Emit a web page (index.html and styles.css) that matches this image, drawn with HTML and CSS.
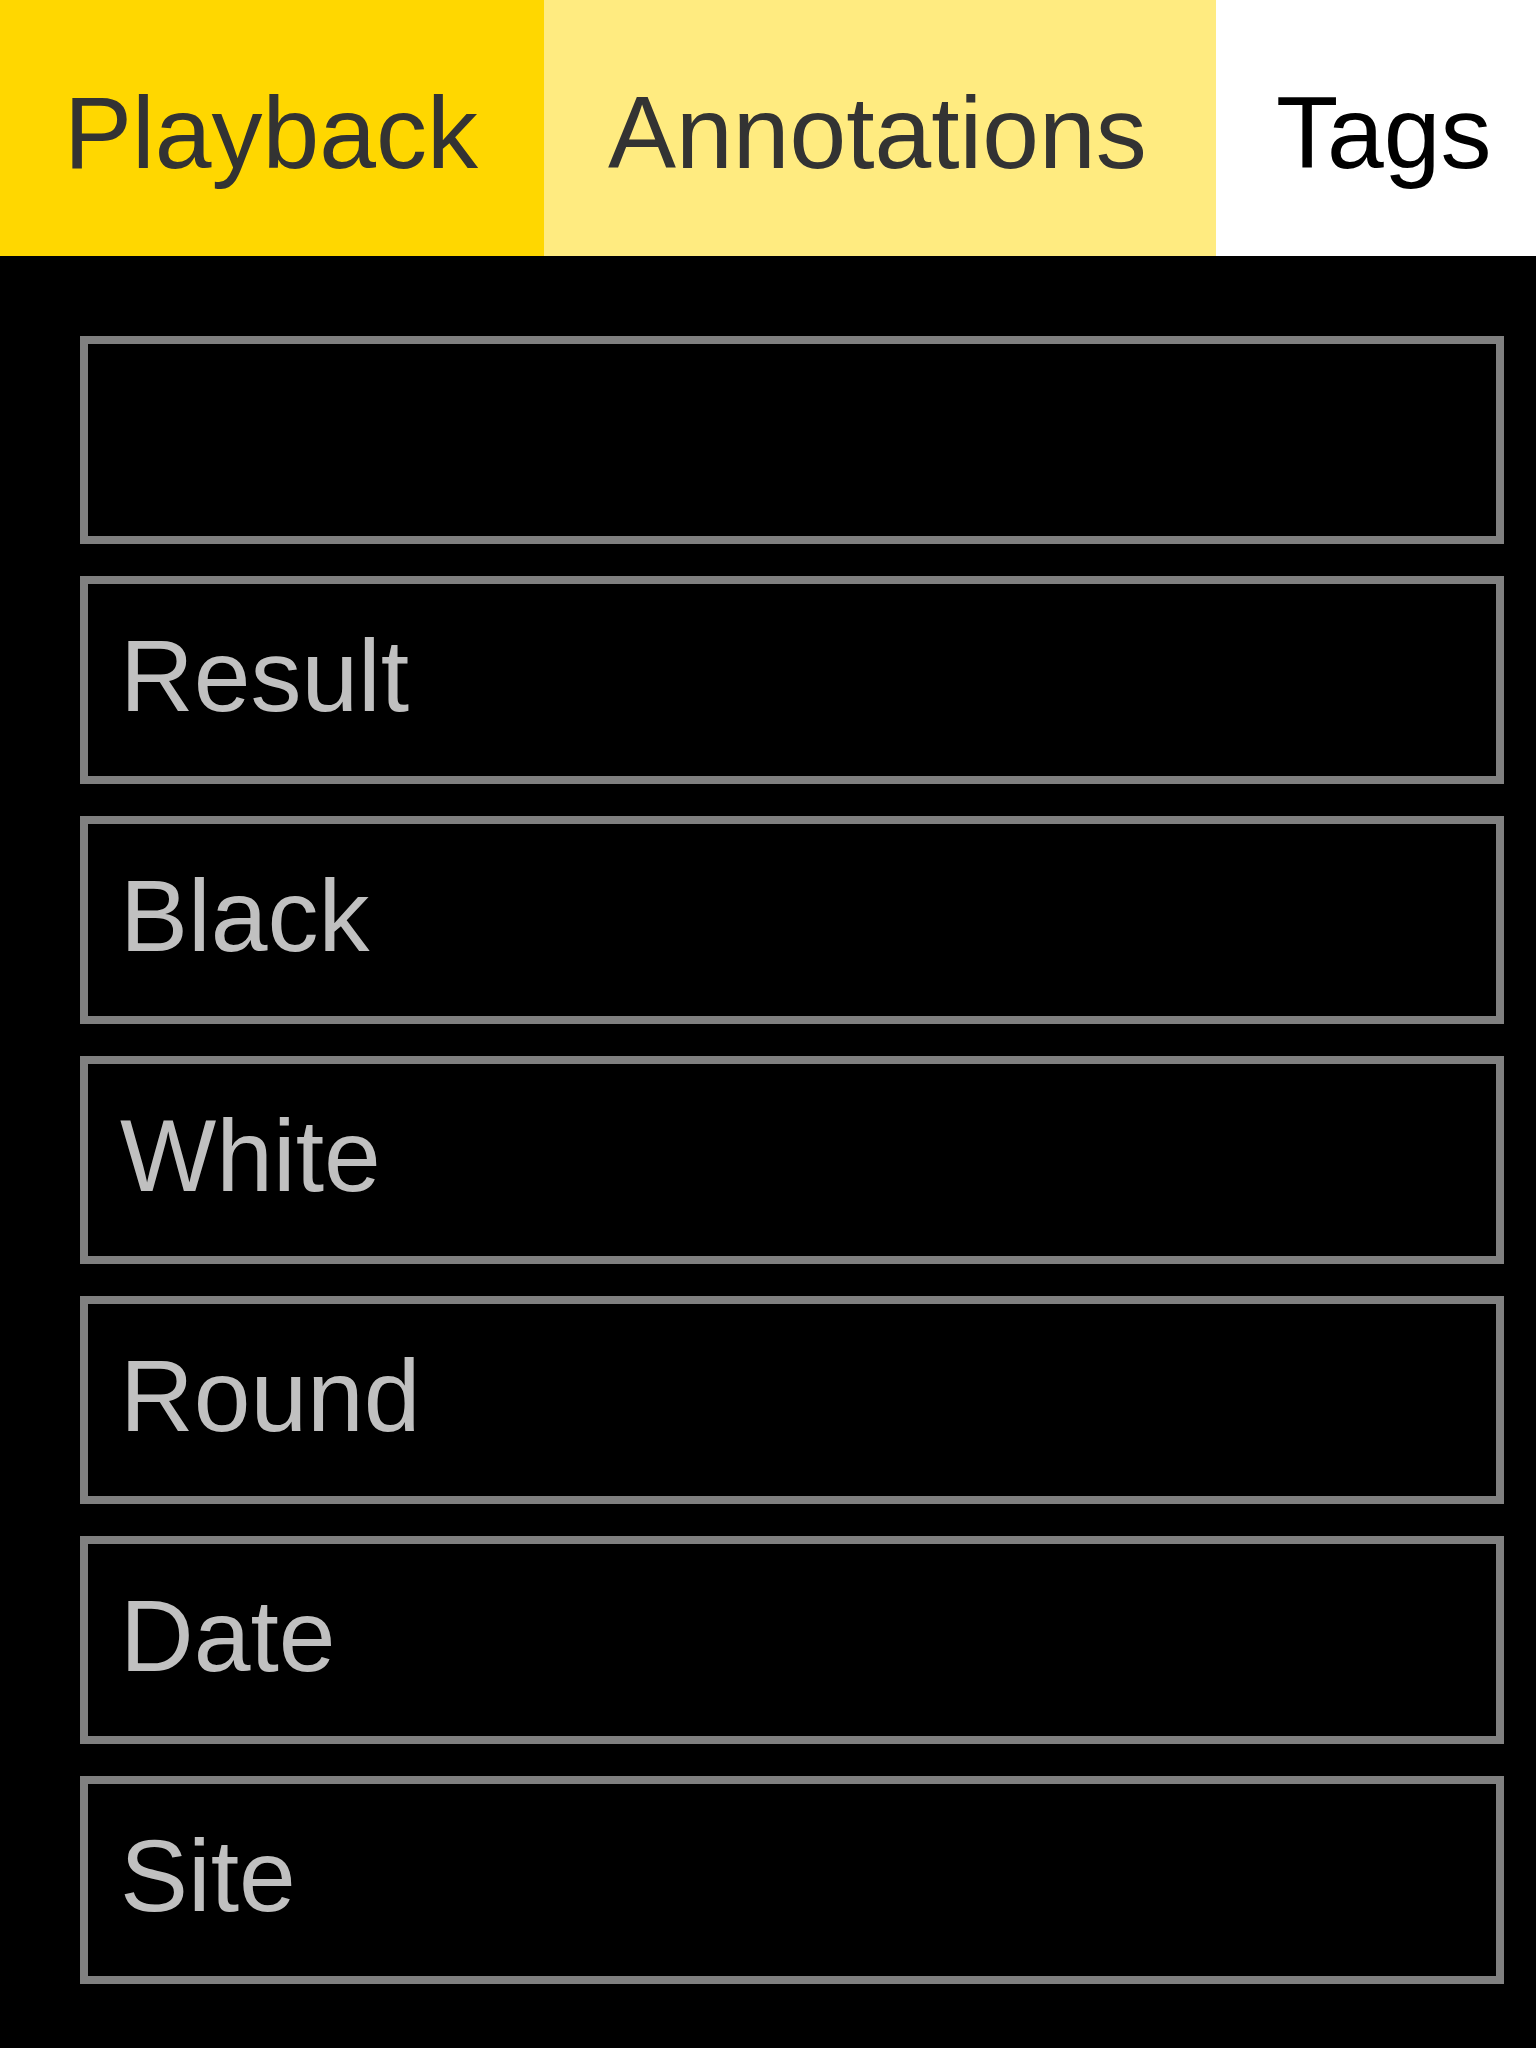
FILE: index.html
```html
<!DOCTYPE html>
<html>
<head>
<meta charset="utf-8">
<link rel="stylesheet" href="styles.css">
</head>
<body>
<div class="tabs">
  <div class="tab tab-playback">Playback</div>
  <div class="tab tab-annotations">Annotations</div>
  <div class="tab tab-tags">Tags</div>
</div>
<div class="fields">
  <div class="field"></div>
  <div class="field">Result</div>
  <div class="field">Black</div>
  <div class="field">White</div>
  <div class="field">Round</div>
  <div class="field">Date</div>
  <div class="field">Site</div>
</div>
</body>
</html>
```
FILE: styles.css
```css
html, body {
  margin: 0;
  padding: 0;
  background: #000;
}
body {
  width: 1536px;
  height: 2048px;
  overflow: hidden;
  font-family: "Liberation Sans", Arial, sans-serif;
}
.tabs {
  display: flex;
  height: 256px;
  overflow: hidden;
  background: #fff;
}
.tab {
  flex: 0 0 auto;
  box-sizing: border-box;
  height: 256px;
  padding: 74px 0 0 64px;
  font-size: 102px;
  line-height: 118px;
  white-space: nowrap;
  color: #333;
}
.tab-playback {
  width: 544px;
  background: #ffd700;
}
.tab-annotations {
  width: 672px;
  background: #ffeb80;
}
.tab-tags {
  flex: 1 1 auto;
  padding-left: 60px;
  background: #fff;
  color: #000;
}
.fields {
  display: flex;
  flex-direction: column;
  gap: 32px;
  padding: 80px 32px 64px 80px;
}
.field {
  box-sizing: border-box;
  height: 208px;
  border: 8px solid #808080;
  padding: 33px 0 0 32px;
  font-size: 102px;
  line-height: 118px;
  color: #c0c0c0;
  white-space: nowrap;
}
```
